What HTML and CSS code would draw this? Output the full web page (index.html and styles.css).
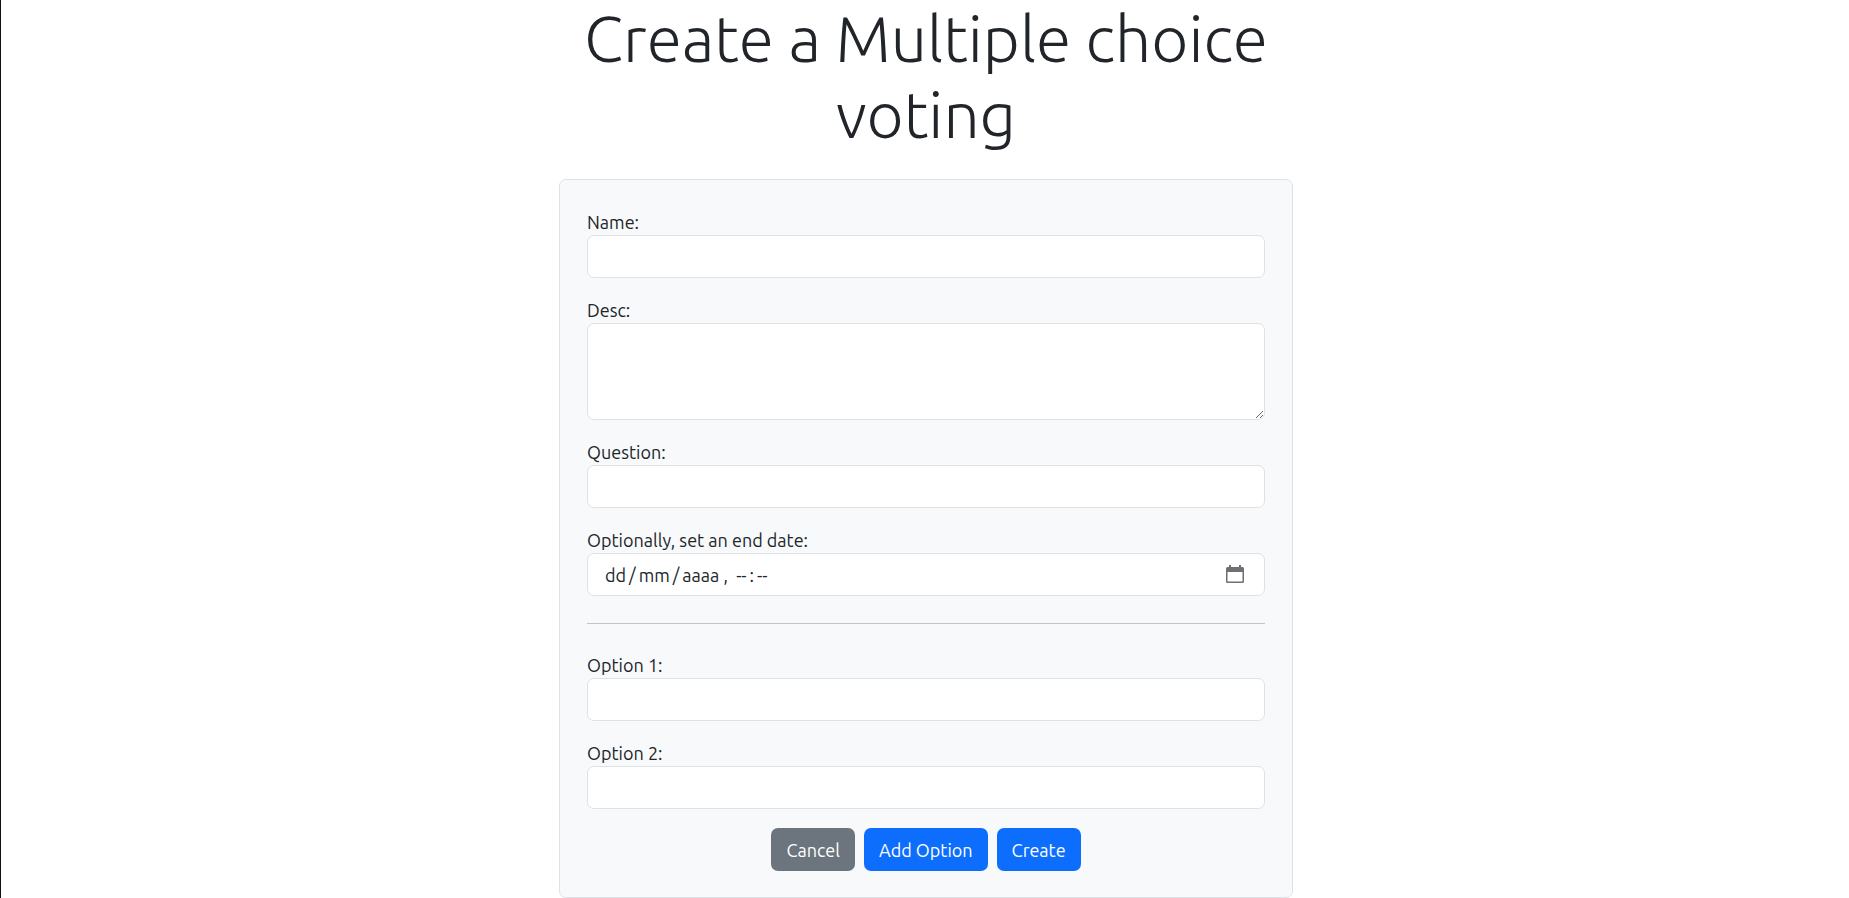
FILE: index.html
```html
<!DOCTYPE html>
<html lang="en">
<head>
<meta charset="utf-8">
<title>Create a Multiple choice voting</title>
<link rel="stylesheet" href="styles.css">
</head>
<body>
<main class="page">
  <h1 class="title">Create a Multiple choice voting</h1>
  <form class="card">
    <div class="field">
      <label for="name">Name:</label>
      <input class="control" id="name" type="text">
    </div>
    <div class="field">
      <label for="desc">Desc:</label>
      <textarea class="control control-area" id="desc"></textarea>
    </div>
    <div class="field">
      <label for="question">Question:</label>
      <input class="control" id="question" type="text">
    </div>
    <div class="field">
      <label for="end">Optionally, set an end date:</label>
      <div class="control date">
        <input class="date-input" id="end" type="text" value="dd&#8201;/&#8201;mm&#8201;/&#8201;aaaa ,  --&#8201;:&#8201;--">
        <button class="date-button" type="button" aria-label="Open calendar">
          <svg width="18" height="18" viewBox="0 0 18 18" fill="#6f6f74">
            <path fill-rule="evenodd" d="M3 0h2v2h8V0h2v2h1.500a1.500 1.500 0 0 1 1.500 1.500v13a1.500 1.500 0 0 1-1.500 1.500h-15A1.500 1.500 0 0 1 0 16.500v-13A1.500 1.500 0 0 1 1.500 2H3zM1.500 7v9q0 .6.600.6h13.800q.6 0 .6-.6V7z"/>
          </svg>
        </button>
      </div>
    </div>
    <hr class="divider">
    <div class="field">
      <label for="option1">Option 1:</label>
      <input class="control" id="option1" type="text">
    </div>
    <div class="field">
      <label for="option2">Option 2:</label>
      <input class="control" id="option2" type="text">
    </div>
    <div class="actions">
      <button class="btn btn-secondary" type="button">Cancel</button>
      <button class="btn btn-primary" type="button">Add Option</button>
      <button class="btn btn-primary" type="submit">Create</button>
    </div>
  </form>
</main>
</body>
</html>
```
FILE: styles.css
```css
* {
  box-sizing: border-box;
}

body {
  margin: 0;
  min-height: 100vh;
  padding-left: 2px;
  border-left: 1px solid #1a0a14;
  background: #fff;
  color: #212529;
  font: 18px/26px Ubuntu, "Noto Sans", sans-serif;
}

.page {
  max-width: 734px;
  margin: 0 auto;
}

.title {
  margin: 0;
  padding: 0 20px 27px;
  font: 300 64px/76px Ubuntu, "Open Sans", "Noto Sans", sans-serif;
  text-align: center;
}

.card {
  padding: 29px 27px 26px;
  border: 1px solid #dee2e6;
  border-radius: 7px;
  background: #f8f9fb;
}

.field {
  display: flex;
  flex-direction: column;
  margin-bottom: 19px;
}

.control {
  width: 100%;
  height: 43px;
  padding: 7px 13px;
  border: 1px solid #dee2e6;
  border-radius: 7px;
  background: #fff;
  color: inherit;
  font: inherit;
}

.control-area {
  height: 97px;
  resize: vertical;
}

.date {
  display: flex;
  align-items: center;
  padding: 0 20px 0 17px;
}

.date-input {
  flex: 1;
  min-width: 0;
  padding: 0;
  border: 0;
  background: none;
  color: inherit;
  font: inherit;
}

.date-button {
  display: flex;
  padding: 0 0 2px;
  border: 0;
  background: none;
}

.divider {
  margin: 27px 0 28px;
  border: 0;
  border-top: 1px solid #c2c4c7;
}

.actions {
  display: flex;
  justify-content: center;
  gap: 9px;
}

.btn {
  height: 43px;
  padding: 0 15px;
  border: 0;
  border-radius: 7px;
  color: #fff;
  font: inherit;
}

.btn-secondary {
  background: #6c757d;
}

.btn-primary {
  background: #0d6efd;
}
```
